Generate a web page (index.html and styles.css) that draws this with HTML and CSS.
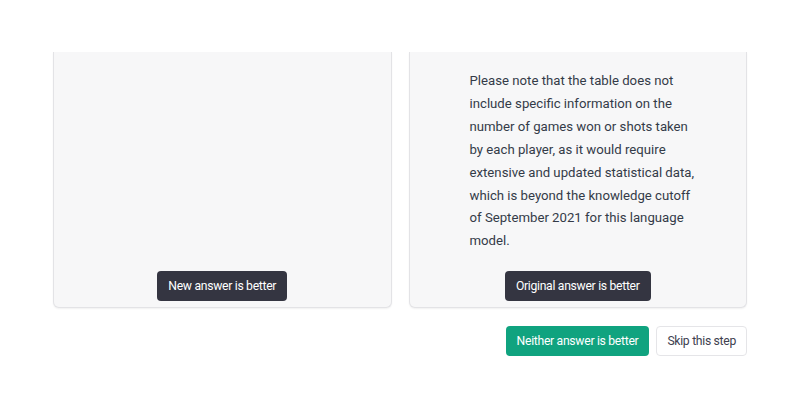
FILE: index.html
```html
<!DOCTYPE html>
<html>
<head>
<meta charset="utf-8">
<link rel="stylesheet" href="styles.css">
</head>
<body>
<div class="page">
  <div class="cards">
    <div class="card">
      <div class="content"></div>
      <div class="actions"><button class="btn dark">New answer is better</button></div>
    </div>
    <div class="card">
      <div class="content">
        <p class="text">Please note that the table does not include specific information on the number of games won or shots taken by each player, as it would require extensive and updated statistical data, which is beyond the knowledge cutoff of September 2021 for this language model.</p>
      </div>
      <div class="actions"><button class="btn dark">Original answer is better</button></div>
    </div>
  </div>
  <div class="footer">
    <button class="btn green">Neither answer is better</button>
    <button class="btn light">Skip this step</button>
  </div>
</div>
</body>
</html>
```
FILE: styles.css
```css
html, body {
  margin: 0;
  padding: 0;
  background: #ffffff;
  font-family: Roboto, "Noto Sans", sans-serif;
}
.page {
  padding: 52px 53px 0 53px;
  display: flex;
  flex-direction: column;
  gap: 18px;
}
.cards {
  display: grid;
  grid-template-columns: 1fr 1fr;
  gap: 17px;
}
.card {
  background: #f7f7f8;
  border: 1px solid #e3e3e6;
  border-top: none;
  border-radius: 0 0 6px 6px;
  box-shadow: 0 1px 2px rgba(0,0,0,0.06);
  height: 256px;
  display: flex;
  flex-direction: column;
  box-sizing: border-box;
}
.content {
  flex: 1;
  padding: 18px 0 0 60px;
}
.text {
  margin: 0;
  width: 228px;
  font-size: 13.2px;
  line-height: 22.9px;
  color: #343b48;
}
.actions {
  display: flex;
  justify-content: center;
  padding-bottom: 6px;
}
.btn {
  font-family: Roboto, "Noto Sans", sans-serif;
  font-size: 12.2px;
  letter-spacing: -0.3px;
  height: 30px;
  padding: 0 10px;
  border-radius: 4px;
  border: 1px solid transparent;
  cursor: pointer;
}
.dark {
  background: #343541;
  color: #ffffff;
}
.footer {
  display: flex;
  justify-content: flex-end;
  gap: 7px;
}
.green {
  background: #10a37f;
  color: #ffffff;
}
.light {
  background: #ffffff;
  color: #40414f;
  border-color: #e5e5e8;
}
```
